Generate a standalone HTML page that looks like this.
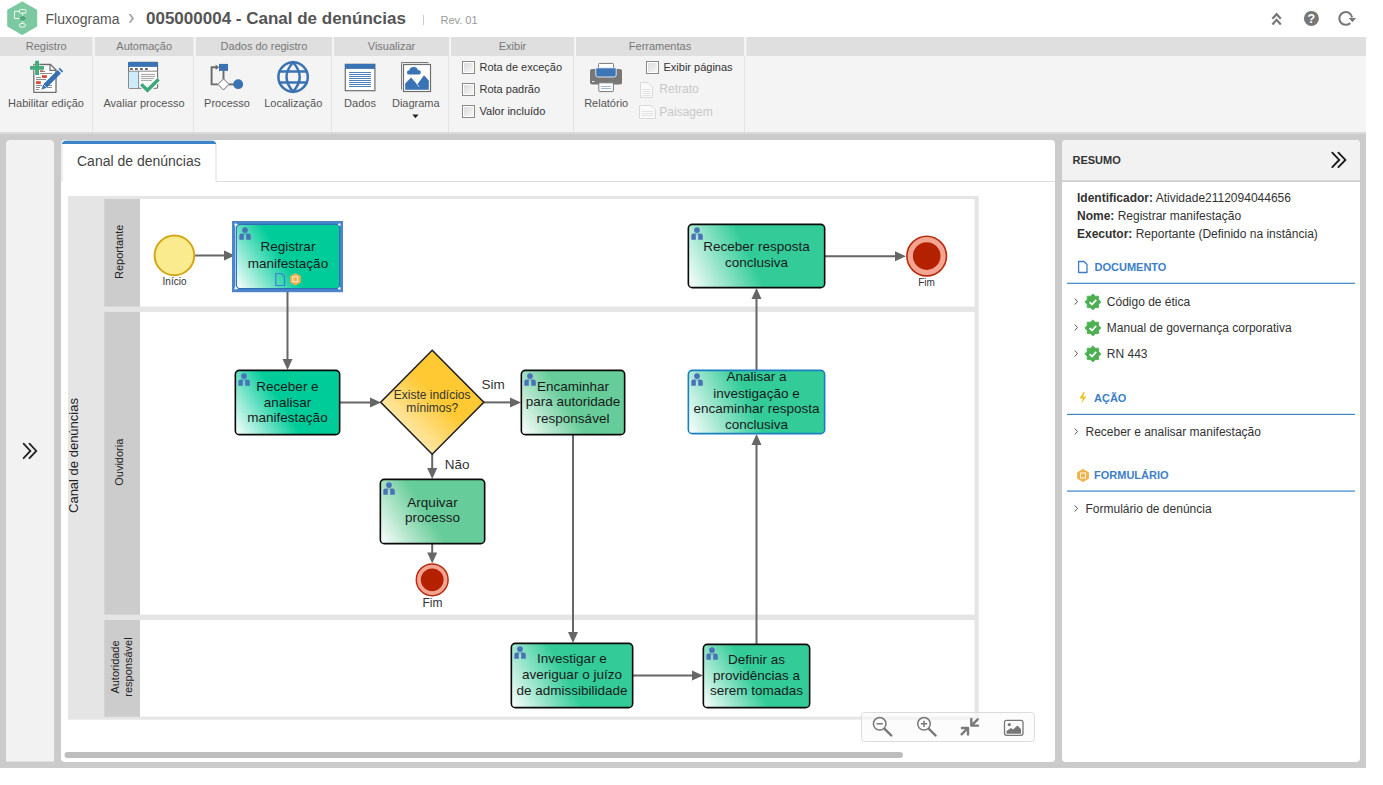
<!DOCTYPE html>
<html><head><meta charset="utf-8">
<style>
html,body{margin:0;padding:0;background:#fff;width:1383px;height:785px;overflow:hidden}
svg{position:absolute;left:0;top:0;display:block}
text{font-family:"Liberation Sans",sans-serif}
</style></head>
<body>
<svg width="1383" height="785" viewBox="0 0 1383 785">
<defs>
 <linearGradient id="gT" x1="0" y1="1" x2="1" y2="0">
  <stop offset="0" stop-color="#ffffff"/><stop offset="0.45" stop-color="#00cc99"/><stop offset="1" stop-color="#00cc99"/>
 </linearGradient>
 <linearGradient id="gT2" x1="0" y1="1" x2="1" y2="0">
  <stop offset="0" stop-color="#ffffff"/><stop offset="0.5" stop-color="#33cc99"/><stop offset="1" stop-color="#33cc99"/>
 </linearGradient>
 <linearGradient id="gG" x1="0" y1="1" x2="1" y2="0">
  <stop offset="0" stop-color="#ffffff"/><stop offset="0.5" stop-color="#66cc99"/><stop offset="1" stop-color="#66cc99"/>
 </linearGradient>
 <linearGradient id="gY" x1="0" y1="1" x2="1" y2="0">
  <stop offset="0.15" stop-color="#fff0b8"/><stop offset="0.6" stop-color="#ffc933"/><stop offset="1" stop-color="#ffc933"/>
 </linearGradient>
 <symbol id="person" viewBox="0 0 12 13">
  <circle cx="5.8" cy="3" r="2.9" fill="#4a72b8"/>
  <path d="M0 12.7 V8.6 Q0 6.6 2.2 6.5 H4.6 V12.7 Z M11.6 12.7 V8.6 Q11.6 6.6 9.4 6.5 H7 V12.7 Z M5.1 6.6 H6.5 L6.2 7.6 H5.4 Z" fill="#4a72b8"/>
 </symbol>
</defs>

<!-- ===== HEADER ===== -->
<g id="logo">
 <path d="M22.2 2.8 L36 10.6 L36 25.8 L22.2 33.6 L8.4 25.8 L8.4 10.6 Z" fill="#7cc8a0" stroke="#7cc8a0" stroke-width="2.4" stroke-linejoin="round"/>
 <rect x="19.4" y="9.5" width="6.6" height="3.6" rx="1" fill="none" stroke="#fff" stroke-width="0.9"/>
 <path d="M19.4 11.3 H14.5 V18.5 H19.5" fill="none" stroke="#fff" stroke-width="0.9"/>
 <line x1="22.7" y1="13.1" x2="22.7" y2="16" stroke="#fff" stroke-width="0.9"/>
 <path d="M22.7 16.2 L25.3 18.5 L22.7 20.8 L20 18.5 Z" fill="#5aa67c" stroke="#3f9a68" stroke-width="0.9"/>
 <line x1="22.7" y1="20.8" x2="22.7" y2="23.2" stroke="#fff" stroke-width="0.9"/>
 <ellipse cx="22.4" cy="25.3" rx="3.3" ry="1.9" fill="none" stroke="#fff" stroke-width="0.9"/>
</g>
<text x="45.5" y="23.7" font-size="14" fill="#555">Fluxograma</text>
<path d="M128.6 14.1 H130.7 L134.1 18.4 L130.7 22.7 H128.6 L131.9 18.4 Z" fill="#a3a3a3"/>
<text x="146" y="24" font-size="17" font-weight="bold" fill="#555">005000004 - Canal de denúncias</text>
<line x1="423.5" y1="15" x2="423.5" y2="25" stroke="#ccc" stroke-width="1"/>
<text x="440.5" y="24" font-size="11" fill="#999">Rev. 01</text>

<!-- header right icons -->
<path d="M1272.4 18.8 L1276.6 14.2 L1280.8 18.8 M1272.4 24.4 L1276.6 19.8 L1280.8 24.4" fill="none" stroke="#777" stroke-width="2.2"/>
<circle cx="1311.4" cy="18.4" r="7.5" fill="#777"/>
<text x="1311.4" y="22.8" font-size="12.5" font-weight="bold" fill="#fff" text-anchor="middle">?</text>
<path d="M1352.04 17.51 A6.4 6.4 0 1 0 1350.23 22.93" fill="none" stroke="#777" stroke-width="2.1"/>
<path d="M1348.7 18 L1356.1 18 L1352.4 22.2 Z" fill="#777"/>


<!-- ===== RIBBON ===== -->
<rect x="0" y="37" width="1366" height="95" fill="#f4f4f4"/>
<rect x="0" y="37" width="92.5" height="19" fill="#dfdfdf"/>
<rect x="95" y="37" width="98.5" height="19" fill="#dfdfdf"/>
<rect x="196" y="37" width="136" height="19" fill="#dfdfdf"/>
<rect x="334" y="37" width="115" height="19" fill="#dfdfdf"/>
<rect x="451" y="37" width="123" height="19" fill="#dfdfdf"/>
<rect x="576" y="37" width="168" height="19" fill="#dfdfdf"/>
<rect x="746.5" y="37" width="619.5" height="19" fill="#dfdfdf"/>
<g fill="#e3e3e3">
 <rect x="92" y="56" width="1" height="76"/>
 <rect x="193" y="56" width="1" height="76"/>
 <rect x="331" y="56" width="1" height="76"/>
 <rect x="448" y="56" width="1" height="76"/>
 <rect x="573" y="56" width="1" height="76"/>
 <rect x="744" y="56" width="1" height="76"/>
</g>
<g font-size="11" fill="#777" text-anchor="middle">
 <text x="46.2" y="50">Registro</text>
 <text x="144.2" y="50">Automação</text>
 <text x="264" y="50">Dados do registro</text>
 <text x="391.5" y="50">Visualizar</text>
 <text x="512.5" y="50">Exibir</text>
 <text x="660" y="50">Ferramentas</text>
</g>
<g font-size="11" fill="#555" text-anchor="middle">
 <text x="46" y="106.7">Habilitar edição</text>
 <text x="144" y="106.7">Avaliar processo</text>
 <text x="227" y="106.7">Processo</text>
 <text x="293.3" y="106.7">Localização</text>
 <text x="360" y="106.7">Dados</text>
 <text x="415.8" y="106.7">Diagrama</text>
 <text x="606.2" y="106.7">Relatório</text>
</g>
<path d="M412.3 114.6 L418.6 114.6 L415.45 118.3 Z" fill="#222"/>
<!-- checkboxes -->
<defs>
 <linearGradient id="cb" x1="0" y1="0" x2="1" y2="1"><stop offset="0" stop-color="#d8d8d8"/><stop offset="1" stop-color="#fafafa"/></linearGradient>
</defs>
<g stroke="#8a8a8a" stroke-width="1" fill="url(#cb)">
 <rect x="462.5" y="61.5" width="12" height="12"/>
 <rect x="462.5" y="83.5" width="12" height="12"/>
 <rect x="462.5" y="105.5" width="12" height="12"/>
 <rect x="646.5" y="61.5" width="12" height="12"/>
</g>
<g fill="none" stroke="#fff" stroke-width="1">
 <rect x="463.5" y="62.5" width="10" height="10"/>
 <rect x="463.5" y="84.5" width="10" height="10"/>
 <rect x="463.5" y="106.5" width="10" height="10"/>
 <rect x="647.5" y="62.5" width="10" height="10"/>
</g>
<g font-size="11" fill="#333">
 <text x="479.5" y="71">Rota de exceção</text>
 <text x="479.5" y="93">Rota padrão</text>
 <text x="479.5" y="115">Valor incluído</text>
 <text x="663.5" y="71">Exibir páginas</text>
</g>
<g font-size="12" fill="#c8c8c8">
 <text x="659.3" y="93.3">Retrato</text>
 <text x="659.3" y="115.5">Paisagem</text>
</g>
<!-- retrato / paisagem icons -->
<g fill="#fafafa" stroke="#dadada" stroke-width="1">
 <path d="M640.5 82.5 H648 L652.5 87 V97.5 H640.5 Z"/>
 <path d="M639.5 105.5 H651 L655.5 109.5 V118.5 H639.5 Z"/>
</g>
<g stroke="#e2e2e2" stroke-width="1">
 <path d="M642.5 89.5 H650.5 M642.5 91.5 H650.5 M642.5 93.5 H650.5 M642.5 95.5 H650.5"/>
 <path d="M641.5 111.5 H653.5 M641.5 113.5 H653.5 M641.5 115.5 H653.5"/>
</g>

<!-- Habilitar edicao icon -->
<g>
 <path d="M33.8 64.5 H50.5 L56 70 V92.3 H33.8 Z" fill="#fff" stroke="#6e6e6e" stroke-width="1.3" stroke-linejoin="round"/>
 <path d="M50 64.5 V70.3 H56" fill="none" stroke="#6e6e6e" stroke-width="1.2"/>
 <g stroke="#808080" stroke-width="0.9">
  <path d="M40 73.5 H52 M36 77.5 H41 M36 79.5 H46 M36 85.5 H42 M36 87.5 H40 M36 89.5 H39 M48 85.5 H52 M47 87.5 H52 M40 71.5 H45"/>
 </g>
 <g fill="#d9452e">
  <rect x="40" y="70.2" width="3" height="1.2"/>
  <rect x="42" y="75.2" width="4.8" height="2.7"/>
  <rect x="36" y="81.2" width="4.8" height="2.7"/>
 </g>
 <path d="M30 65.9 H35.1 V60.8 H39 V65.9 H44 V69.8 H39 V74.9 H35.1 V69.8 H30 Z" fill="#45ad7d" stroke="#f4f4f4" stroke-width="0.6" paint-order="stroke"/>
 <path d="M41.4 89.8 L43.3 84.3 L57.9 69.7 L61.3 73.1 L46.7 87.7 Z" fill="#3570b3"/>
 <path d="M58.6 69 L59.8 67.8 L63.2 71.2 L62 72.4 Z" fill="#3570b3"/>
 <path d="M43.3 84.3 L46.7 87.7" stroke="#fff" stroke-width="0.7"/>
 <path d="M57.4 69.5 L61.5 73.6" stroke="#fff" stroke-width="0.7"/>
</g>

<!-- Avaliar processo icon -->
<g>
 <rect x="128.6" y="62.3" width="29" height="26" rx="1" fill="#fff" stroke="#6e6e6e" stroke-width="1.1"/>
 <rect x="128" y="62" width="30" height="4.9" fill="#3a73b4"/>
 <rect x="128.8" y="71.5" width="9.6" height="16.5" fill="#cfeafd"/>
 <path d="M128.6 71.2 H157.5 M138.6 71.2 V88" stroke="#7a7a7a" stroke-width="0.9"/>
 <g fill="#6a6a6a"><rect x="130" y="68" width="2.8" height="2"/><rect x="135" y="68" width="2.8" height="2"/><rect x="140" y="68" width="2.8" height="2"/><rect x="145" y="68" width="2.8" height="2"/></g>
 <path d="M141 74.4 H155 M141 76.4 H155 M141 78.4 H154 M141 80.4 H152" stroke="#8a8a8a" stroke-width="0.8"/>
 <path d="M141.2 84.3 L147.5 90.3 L158.6 79.2" fill="none" stroke="#fff" stroke-width="5.5"/>
 <path d="M141.2 84.3 L147.5 90.3 L158.6 79.2" fill="none" stroke="#3ea87a" stroke-width="3.4"/>
</g>

<!-- Processo icon -->
<g>
 <path d="M216.5 67.3 H211.6 V84.4 H218" fill="none" stroke="#6a6a6a" stroke-width="1.9"/>
 <path d="M215.6 64.6 L219.2 67.3 L215.6 70 Z" fill="#6a6a6a"/>
 <rect x="219" y="63.9" width="9" height="7" fill="#3a73b4"/>
 <line x1="223.5" y1="70.8" x2="223.5" y2="79" stroke="#6a6a6a" stroke-width="1.9"/>
 <path d="M223.5 78.8 L229 84.4 L223.5 90 L218 84.4 Z" fill="#fff" stroke="#6a6a6a" stroke-width="1"/>
 <line x1="229" y1="84.4" x2="234" y2="84.4" stroke="#6a6a6a" stroke-width="1.9"/>
 <circle cx="238.2" cy="84.2" r="4.9" fill="#3a73b4"/>
</g>

<!-- Globe icon -->
<g fill="none" stroke="#3a73b4" stroke-width="2.5">
 <circle cx="293.1" cy="77" r="14.7"/>
 <path d="M293.1 62.3 Q286.5 70 286.5 77 Q286.5 84 293.1 91.7 Q299.7 84 299.7 77 Q299.7 70 293.1 62.3 Z"/>
 <line x1="278.5" y1="71.5" x2="307.7" y2="71.5"/>
 <line x1="278.5" y1="82.5" x2="307.7" y2="82.5"/>
</g>

<!-- Dados icon -->
<g>
 <rect x="345.3" y="64.3" width="29.6" height="26.4" fill="#fff" stroke="#6e6e6e" stroke-width="1.2"/>
 <rect x="345" y="64" width="30" height="4.9" fill="#3a73b4"/>
 <g stroke="#3a73b4" stroke-width="0.9">
  <path d="M349 72.5 H371 M349 74.5 H371 M349 76.5 H371 M349 78.5 H371 M349 80.5 H371 M349 82.5 H371 M349 84.5 H371 M349 86.5 H371"/>
 </g>
</g>

<!-- Diagrama icon -->
<g>
 <path d="M401.5 89.5 V62.5 H428.5" fill="none" stroke="#7a7a7a" stroke-width="1"/>
 <rect x="403.5" y="64.5" width="27" height="27" fill="#fff" stroke="#6e6e6e" stroke-width="1.2"/>
 <path d="M405.2 89.8 V83.6 L411.1 77.6 L417.2 84.6 L424 75.2 L428.8 80.5 V89.8 Z" fill="#3a73b4"/>
 <path d="M416.6 83.6 L419.3 87" stroke="#fff" stroke-width="0.7"/>
 <path d="M409.5 74.6 Q406.9 74.6 406.9 72.4 Q406.9 70.2 409.4 70.2 Q410 67.1 413.6 67.1 Q417.3 67.1 417.8 70.1 Q420.8 70.1 420.8 72.4 Q420.8 74.6 418.3 74.6 Z" fill="#3a73b4"/>
</g>

<!-- Printer icon -->
<g>
 <rect x="598.5" y="63.4" width="15" height="7" rx="1" fill="#fff" stroke="#777" stroke-width="1"/>
 <rect x="590" y="69" width="32" height="15.6" rx="2" fill="#777"/>
 <path d="M595.8 67.8 H616.2 V75 Q616.2 77 614.2 77 H597.8 Q595.8 77 595.8 75 Z" fill="#3d76b5" stroke="#fff" stroke-width="0.8"/>
 <rect x="598.8" y="82.8" width="14.6" height="8.8" rx="0.8" fill="#fff" stroke="#777" stroke-width="1"/>
 <path d="M601 86.5 H611 M601 88.5 H611" stroke="#7fa6d6" stroke-width="0.8"/>
 <rect x="592" y="81" width="2.5" height="0.9" fill="#fff"/>
</g>


<!-- ===== MAIN AREA ===== -->
<rect x="0" y="132" width="1366" height="636" fill="#cbcbcb"/>
<rect x="0" y="132" width="1366" height="2" fill="#dadada"/>
<!-- left collapsed panel -->
<path d="M6 144 Q6 140 10 140 H50 Q54 140 54 144 V761.5 H6 Z" fill="#f2f2f2"/>
<path d="M23.6 443.6 L30.4 450.9 L23.6 458.2 M29.5 443.6 L36.3 450.9 L29.5 458.2" fill="none" stroke="#222" stroke-width="1.8" stroke-linecap="round"/>
<!-- main panel -->
<path d="M61 144 Q61 140 65 140 H1051 Q1055 140 1055 144 V758 Q1055 762 1051 762 H65 Q61 762 61 758 Z" fill="#fff"/>
<!-- tab -->
<rect x="216" y="181" width="839" height="1" fill="#dddddd"/>
<clipPath id="tabclip"><path d="M61.5 182 V146 Q61.5 140.5 67 140.5 H211 Q216.5 140.5 216.5 146 V182 Z"/></clipPath>
<path d="M62 182 V146 Q62 141 67 141 H211 Q216 141 216 146 V181.5" fill="#fff" stroke="#dddddd" stroke-width="1"/>
<rect x="60" y="140.5" width="158" height="3.5" fill="#3d85c6" clip-path="url(#tabclip)"/>
<text x="77" y="166.4" font-size="14" fill="#444">Canal de denúncias</text>
<!-- scrollbar -->
<rect x="64.5" y="752" width="838.5" height="6" rx="3" fill="#bdbdbd"/>
<!-- right panel -->
<path d="M1062 144 Q1062 140 1066 140 H1356 Q1360 140 1360 144 V758 Q1360 762 1356 762 H1066 Q1062 762 1062 758 Z" fill="#fff"/>
<path d="M1062 144 Q1062 140 1066 140 H1356 Q1360 140 1360 144 V181 H1062 Z" fill="#f2f2f2"/>
<rect x="1062" y="180.5" width="298" height="1.2" fill="#bcbcbc"/>
<text x="1072.5" y="164" font-size="11" font-weight="bold" fill="#333">RESUMO</text>
<path d="M1332.3 152.7 L1339.2 159.9 L1332.3 167.1 M1338.4 152.7 L1345.4 159.9 L1338.4 167.1" fill="none" stroke="#1a1a1a" stroke-width="1.9" stroke-linecap="round"/>
<g font-size="12" fill="#333">
 <text x="1077" y="201.8"><tspan font-weight="bold">Identificador:</tspan> Atividade2112094044656</text>
 <text x="1077" y="219.8"><tspan font-weight="bold">Nome:</tspan> Registrar manifestação</text>
 <text x="1077" y="237.8"><tspan font-weight="bold">Executor:</tspan> Reportante (Definido na instância)</text>
</g>
<!-- DOCUMENTO -->
<path d="M1078.6 261.5 H1084 L1087 264.5 V272.5 H1078.6 Z" fill="none" stroke="#3d7fc7" stroke-width="1.3" stroke-linejoin="round"/>
<text x="1094.5" y="271.3" font-size="11" font-weight="bold" fill="#3d7fc7">DOCUMENTO</text>
<rect x="1067" y="282.7" width="288" height="1.2" fill="#3d85c6"/>
<g fill="#555" font-size="12">
</g>
<g fill="none" stroke="#555" stroke-width="1">
 <path d="M1074.8 298.5 L1077.5 301.5 L1074.8 304.5"/>
 <path d="M1074.8 324.5 L1077.5 327.5 L1074.8 330.5"/>
 <path d="M1074.8 350.5 L1077.5 353.5 L1074.8 356.5"/>
 <path d="M1074.8 428.5 L1077.5 431.5 L1074.8 434.5"/>
 <path d="M1074.8 505.5 L1077.5 508.5 L1074.8 511.5"/>
</g>
<g id="badges"><path d="M1092.90 293.90 L1095.27 296.17 L1098.56 296.24 L1098.63 299.53 L1100.90 301.90 L1098.63 304.27 L1098.56 307.56 L1095.27 307.63 L1092.90 309.90 L1090.53 307.63 L1087.24 307.56 L1087.17 304.27 L1084.90 301.90 L1087.17 299.53 L1087.24 296.24 L1090.53 296.17 Z" fill="#4caf50" stroke="#4caf50" stroke-width="0.8" stroke-linejoin="round"/><path d="M1089.6 302.2 L1092 304.5 L1096.2 299.9" fill="none" stroke="#fff" stroke-width="1.8"/><path d="M1092.90 319.90 L1095.27 322.17 L1098.56 322.24 L1098.63 325.53 L1100.90 327.90 L1098.63 330.27 L1098.56 333.56 L1095.27 333.63 L1092.90 335.90 L1090.53 333.63 L1087.24 333.56 L1087.17 330.27 L1084.90 327.90 L1087.17 325.53 L1087.24 322.24 L1090.53 322.17 Z" fill="#4caf50" stroke="#4caf50" stroke-width="0.8" stroke-linejoin="round"/><path d="M1089.6 328.2 L1092 330.5 L1096.2 325.9" fill="none" stroke="#fff" stroke-width="1.8"/><path d="M1092.90 345.90 L1095.27 348.17 L1098.56 348.24 L1098.63 351.53 L1100.90 353.90 L1098.63 356.27 L1098.56 359.56 L1095.27 359.63 L1092.90 361.90 L1090.53 359.63 L1087.24 359.56 L1087.17 356.27 L1084.90 353.90 L1087.17 351.53 L1087.24 348.24 L1090.53 348.17 Z" fill="#4caf50" stroke="#4caf50" stroke-width="0.8" stroke-linejoin="round"/><path d="M1089.6 354.2 L1092 356.5 L1096.2 351.9" fill="none" stroke="#fff" stroke-width="1.8"/></g>
<g font-size="12" fill="#333">
 <text x="1106.8" y="305.5">Código de ética</text>
 <text x="1106.8" y="331.6">Manual de governança corporativa</text>
 <text x="1106.8" y="357.8">RN 443</text>
 <text x="1085.5" y="436">Receber e analisar manifestação</text>
 <text x="1085.5" y="513">Formulário de denúncia</text>
</g>
<!-- ACAO -->
<path d="M1083.5 392 L1079.5 398.5 H1082.8 L1081.5 403.5 L1086.3 396.5 H1083 L1084.8 392 Z" fill="#f4c11c"/>
<text x="1094" y="401.9" font-size="11" font-weight="bold" fill="#3d7fc7">AÇÃO</text>
<rect x="1067" y="413.8" width="288" height="1.2" fill="#3d85c6"/>
<!-- FORMULARIO -->
<path d="M1083 469.5 L1088.4 472.5 V478.5 L1083 481.5 L1077.6 478.5 V472.5 Z" fill="#f0b24a" stroke="#f0b24a" stroke-width="1" stroke-linejoin="round"/>
<rect x="1080.6" y="473" width="5" height="5" fill="none" stroke="#fff" stroke-width="0.9"/>
<text x="1094" y="479" font-size="11" font-weight="bold" fill="#3d7fc7">FORMULÁRIO</text>
<rect x="1067" y="490.5" width="288" height="1.2" fill="#3d85c6"/>

<defs><linearGradient id="g1" gradientUnits="userSpaceOnUse" x1="380.7" y1="454.2" x2="483.8" y2="350.3"><stop offset="0" stop-color="#ffffff"/><stop offset="0.55" stop-color="#ffc933"/><stop offset="1" stop-color="#ffc933"/></linearGradient><linearGradient id="g2" gradientUnits="userSpaceOnUse" x1="236.0" y1="289.0" x2="340.0" y2="224.0"><stop offset="0" stop-color="#ffffff"/><stop offset="0.46" stop-color="#00cc99"/><stop offset="1" stop-color="#00cc99"/></linearGradient><linearGradient id="g3" gradientUnits="userSpaceOnUse" x1="235.0" y1="435.0" x2="340.0" y2="370.0"><stop offset="0" stop-color="#ffffff"/><stop offset="0.46" stop-color="#00cc99"/><stop offset="1" stop-color="#00cc99"/></linearGradient><linearGradient id="g4" gradientUnits="userSpaceOnUse" x1="521.0" y1="435.0" x2="625.0" y2="370.0"><stop offset="0" stop-color="#ffffff"/><stop offset="0.46" stop-color="#66cc99"/><stop offset="1" stop-color="#66cc99"/></linearGradient><linearGradient id="g5" gradientUnits="userSpaceOnUse" x1="380.0" y1="544.0" x2="485.0" y2="479.0"><stop offset="0" stop-color="#ffffff"/><stop offset="0.46" stop-color="#66cc99"/><stop offset="1" stop-color="#66cc99"/></linearGradient><linearGradient id="g6" gradientUnits="userSpaceOnUse" x1="688.0" y1="288.0" x2="825.0" y2="224.0"><stop offset="0" stop-color="#ffffff"/><stop offset="0.46" stop-color="#33cc99"/><stop offset="1" stop-color="#33cc99"/></linearGradient><linearGradient id="g7" gradientUnits="userSpaceOnUse" x1="688.0" y1="434.0" x2="825.0" y2="370.0"><stop offset="0" stop-color="#ffffff"/><stop offset="0.46" stop-color="#33cc99"/><stop offset="1" stop-color="#33cc99"/></linearGradient><linearGradient id="g8" gradientUnits="userSpaceOnUse" x1="511.0" y1="708.0" x2="633.0" y2="643.0"><stop offset="0" stop-color="#ffffff"/><stop offset="0.46" stop-color="#33cc99"/><stop offset="1" stop-color="#33cc99"/></linearGradient><linearGradient id="g9" gradientUnits="userSpaceOnUse" x1="703.0" y1="708.0" x2="810.0" y2="644.0"><stop offset="0" stop-color="#ffffff"/><stop offset="0.46" stop-color="#33cc99"/><stop offset="1" stop-color="#33cc99"/></linearGradient></defs>
<!-- ===== DIAGRAM ===== -->
<rect x="68" y="196" width="910.7" height="523.7" fill="#e5e5e5"/>
<rect x="104.3" y="199" width="35.7" height="107.5" fill="#cccccc"/>
<rect x="104.3" y="311.9" width="35.7" height="302.7" fill="#cccccc"/>
<rect x="104.3" y="620" width="35.7" height="96.7" fill="#cccccc"/>
<rect x="140" y="199" width="834.5" height="107.5" fill="#fff"/>
<rect x="140" y="311.9" width="834.5" height="302.7" fill="#fff"/>
<rect x="140" y="620" width="834.5" height="96.7" fill="#fff"/>
<text x="77.6" y="455.5" font-size="13" fill="#222" text-anchor="middle" transform="rotate(-90 77.6 455.5)">Canal de denúncias</text>
<text x="123" y="251.8" font-size="11" fill="#222" text-anchor="middle" transform="rotate(-90 123 251.8)">Reportante</text>
<text x="123" y="462.2" font-size="11" fill="#222" text-anchor="middle" transform="rotate(-90 123 462.2)">Ouvidoria</text>
<g transform="rotate(-90 119 667)"><text x="119" y="667" font-size="11" fill="#222" text-anchor="middle">Autoridade</text><text x="119" y="680" font-size="11" fill="#222" text-anchor="middle">responsável</text></g>
<g stroke="#666" stroke-width="2" fill="none"><path d="M195 255.5 H226"/><path d="M287.5 292 V360"/><path d="M340 402.5 H371"/><path d="M484 402.4 H511"/><path d="M432.2 454 V469"/><path d="M432.2 544 V554"/><path d="M573 435 V633"/><path d="M633 675.5 H693"/><path d="M756.5 644 V445"/><path d="M756.5 370 V299"/><path d="M825 256.3 H896"/></g>
<path d="M235.0 255.5 L224.0 250.5 L224.0 260.5 Z" fill="#666"/>
<path d="M287.5 370.0 L282.5 359.0 L292.5 359.0 Z" fill="#666"/>
<path d="M381.0 402.5 L370.0 397.5 L370.0 407.5 Z" fill="#666"/>
<path d="M521.0 402.4 L510.0 397.4 L510.0 407.4 Z" fill="#666"/>
<path d="M432.2 479.0 L427.2 468.0 L437.2 468.0 Z" fill="#666"/>
<path d="M432.2 563.5 L427.2 552.5 L437.2 552.5 Z" fill="#666"/>
<path d="M573.0 643.0 L568.0 632.0 L578.0 632.0 Z" fill="#666"/>
<path d="M703.0 675.5 L692.0 670.5 L692.0 680.5 Z" fill="#666"/>
<path d="M756.5 434.0 L751.5 445.0 L761.5 445.0 Z" fill="#666"/>
<path d="M756.5 288.0 L751.5 299.0 L761.5 299.0 Z" fill="#666"/>
<path d="M906.0 256.3 L895.0 251.3 L895.0 261.3 Z" fill="#666"/>
<circle cx="174.4" cy="255.4" r="19.8" fill="#fbeb8f" stroke="#d4a615" stroke-width="2"/>
<text x="174.5" y="285" font-size="10" fill="#333" text-anchor="middle">Início</text>
<circle cx="926.7" cy="256.1" r="19.8" fill="#f4a592" stroke="#b82a0c" stroke-width="1.6"/>
<circle cx="926.7" cy="256.1" r="13.8" fill="#b32100"/>
<text x="926.6" y="286" font-size="10" fill="#333" text-anchor="middle">Fim</text>
<circle cx="432.2" cy="579.8" r="15.9" fill="#f4a592" stroke="#b82a0c" stroke-width="1.5"/>
<circle cx="432.2" cy="579.8" r="11.4" fill="#b32100"/>
<text x="432.5" y="606.8" font-size="12" fill="#333" text-anchor="middle">Fim</text>
<path d="M432.2 350.3 L483.8 402.3 L432.2 454.2 L380.7 402.3 Z" fill="url(#g1)" stroke="#222" stroke-width="1.6"/>
<text x="432.2" y="398.9" font-size="12" fill="#333" text-anchor="middle">Existe indícios</text>
<text x="432.2" y="412.2" font-size="12" fill="#333" text-anchor="middle">mínimos?</text>
<text x="481.5" y="388.5" font-size="13.5" fill="#333">Sim</text>
<text x="444.8" y="469.3" font-size="13.5" fill="#333">Não</text>
<rect x="233.6" y="222.6" width="107.8" height="68" fill="none" stroke="#4a86c8" stroke-width="3.2"/>
<rect x="236.35" y="224.35" width="103.30" height="64.30" rx="4" fill="url(#g2)" stroke="#2d6fb8" stroke-width="1.2"/><use href="#person" x="239.2" y="227.1" width="12" height="13"/><text x="288.0" y="251.3" font-size="13.5" fill="#1a1a1a" text-anchor="middle">Registrar</text><text x="288.0" y="267.5" font-size="13.5" fill="#1a1a1a" text-anchor="middle">manifestação</text>
<rect x="235.35" y="370.35" width="104.30" height="64.30" rx="4" fill="url(#g3)" stroke="#0a0a0a" stroke-width="1.6"/><use href="#person" x="238.2" y="373.1" width="12" height="13"/><text x="287.5" y="390.6" font-size="13.5" fill="#1a1a1a" text-anchor="middle">Receber e</text><text x="287.5" y="406.7" font-size="13.5" fill="#1a1a1a" text-anchor="middle">analisar</text><text x="287.5" y="422.0" font-size="13.5" fill="#1a1a1a" text-anchor="middle">manifestação</text>
<rect x="521.35" y="370.35" width="103.30" height="64.30" rx="4" fill="url(#g4)" stroke="#0a0a0a" stroke-width="1.6"/><use href="#person" x="524.2" y="373.1" width="12" height="13"/><text x="573.0" y="390.7" font-size="13.5" fill="#1a1a1a" text-anchor="middle">Encaminhar</text><text x="573.0" y="406.4" font-size="13.5" fill="#1a1a1a" text-anchor="middle">para autoridade</text><text x="573.0" y="422.5" font-size="13.5" fill="#1a1a1a" text-anchor="middle">responsável</text>
<rect x="380.35" y="479.35" width="104.30" height="64.30" rx="4" fill="url(#g5)" stroke="#0a0a0a" stroke-width="1.6"/><use href="#person" x="383.2" y="482.1" width="12" height="13"/><text x="432.5" y="506.7" font-size="13.5" fill="#1a1a1a" text-anchor="middle">Arquivar</text><text x="432.5" y="522.0" font-size="13.5" fill="#1a1a1a" text-anchor="middle">processo</text>
<rect x="688.35" y="224.35" width="136.30" height="63.30" rx="4" fill="url(#g6)" stroke="#0a0a0a" stroke-width="1.6"/><use href="#person" x="691.2" y="227.1" width="12" height="13"/><text x="756.5" y="251.2" font-size="13.5" fill="#1a1a1a" text-anchor="middle">Receber resposta</text><text x="756.5" y="267.3" font-size="13.5" fill="#1a1a1a" text-anchor="middle">conclusiva</text>
<rect x="688.35" y="370.35" width="136.30" height="63.30" rx="4" fill="url(#g7)" stroke="#1a7fc0" stroke-width="1.6"/><use href="#person" x="691.2" y="373.1" width="12" height="13"/><text x="756.5" y="381.4" font-size="13.5" fill="#1a1a1a" text-anchor="middle">Analisar a</text><text x="756.5" y="397.6" font-size="13.5" fill="#1a1a1a" text-anchor="middle">investigação e</text><text x="756.5" y="413.4" font-size="13.5" fill="#1a1a1a" text-anchor="middle">encaminhar resposta</text><text x="756.5" y="429.4" font-size="13.5" fill="#1a1a1a" text-anchor="middle">conclusiva</text>
<rect x="511.35" y="643.35" width="121.30" height="64.30" rx="4" fill="url(#g8)" stroke="#0a0a0a" stroke-width="1.6"/><use href="#person" x="514.2" y="646.1" width="12" height="13"/><text x="572.0" y="662.8" font-size="13.5" fill="#1a1a1a" text-anchor="middle">Investigar e</text><text x="572.0" y="679.0" font-size="13.5" fill="#1a1a1a" text-anchor="middle">averiguar o juízo</text><text x="572.0" y="694.5" font-size="13.5" fill="#1a1a1a" text-anchor="middle">de admissibilidade</text>
<rect x="703.35" y="644.35" width="106.30" height="63.30" rx="4" fill="url(#g9)" stroke="#0a0a0a" stroke-width="1.6"/><use href="#person" x="706.2" y="647.1" width="12" height="13"/><text x="756.5" y="664.0" font-size="13.5" fill="#1a1a1a" text-anchor="middle">Definir as</text><text x="756.5" y="679.7" font-size="13.5" fill="#1a1a1a" text-anchor="middle">providências a</text><text x="756.5" y="695.2" font-size="13.5" fill="#1a1a1a" text-anchor="middle">serem tomadas</text>
<g fill="#fff"><rect x="234.5" y="223.5" width="2" height="2"/><rect x="338.5" y="223.5" width="2" height="2"/><rect x="234.5" y="287.5" width="2" height="2"/><rect x="338.5" y="287.5" width="2" height="2"/></g>
<path d="M275.8 273.5 H281.5 L284.5 276.5 V285.5 H275.8 Z" fill="none" stroke="#3d7fd0" stroke-width="1.2" stroke-linejoin="round"/>
<path d="M295.5 273 L300.8 276 V282.5 L295.5 285.5 L290.2 282.5 V276 Z" fill="#f2b04c"/>
<rect x="292.8" y="276.8" width="5" height="5" fill="none" stroke="#fff" stroke-width="0.8"/>
<rect x="861.5" y="712.5" width="173" height="29" rx="3" fill="#fafafa" fill-opacity="0.6" stroke="#dcdcdc" stroke-width="1"/>
<g fill="none" stroke="#777" stroke-width="1.5"><circle cx="879.7" cy="723.8" r="6.3"/><path d="M876.6 723.8 H882.8"/><circle cx="924" cy="723.8" r="6.3"/><path d="M920.9 723.8 H927.1 M924 720.7 V726.9"/></g>
<g stroke="#777" stroke-width="2.4" stroke-linecap="round"><path d="M884.6 728.8 L891.3 735.5"/><path d="M928.9 728.8 L935.6 735.5"/></g>
<g stroke="#7a7a7a" stroke-width="2.4" fill="none" stroke-linecap="round" stroke-linejoin="round"><path d="M961.6 734.3 L967.9 728 M961.9 728 H968 V734.6 M977.7 719.3 L971.4 725.6 M971.3 718.9 V725.6 H978"/></g>
<rect x="1004.5" y="720.3" width="18.5" height="15" rx="2" fill="none" stroke="#777" stroke-width="1.3"/>
<circle cx="1009.3" cy="724.6" r="1.6" fill="#777"/>
<path d="M1006.5 733.8 V731 L1011 728 L1013 729.5 L1017.5 725.5 L1021 729 V733.8 Z" fill="#777"/>
</svg>
</body></html>
